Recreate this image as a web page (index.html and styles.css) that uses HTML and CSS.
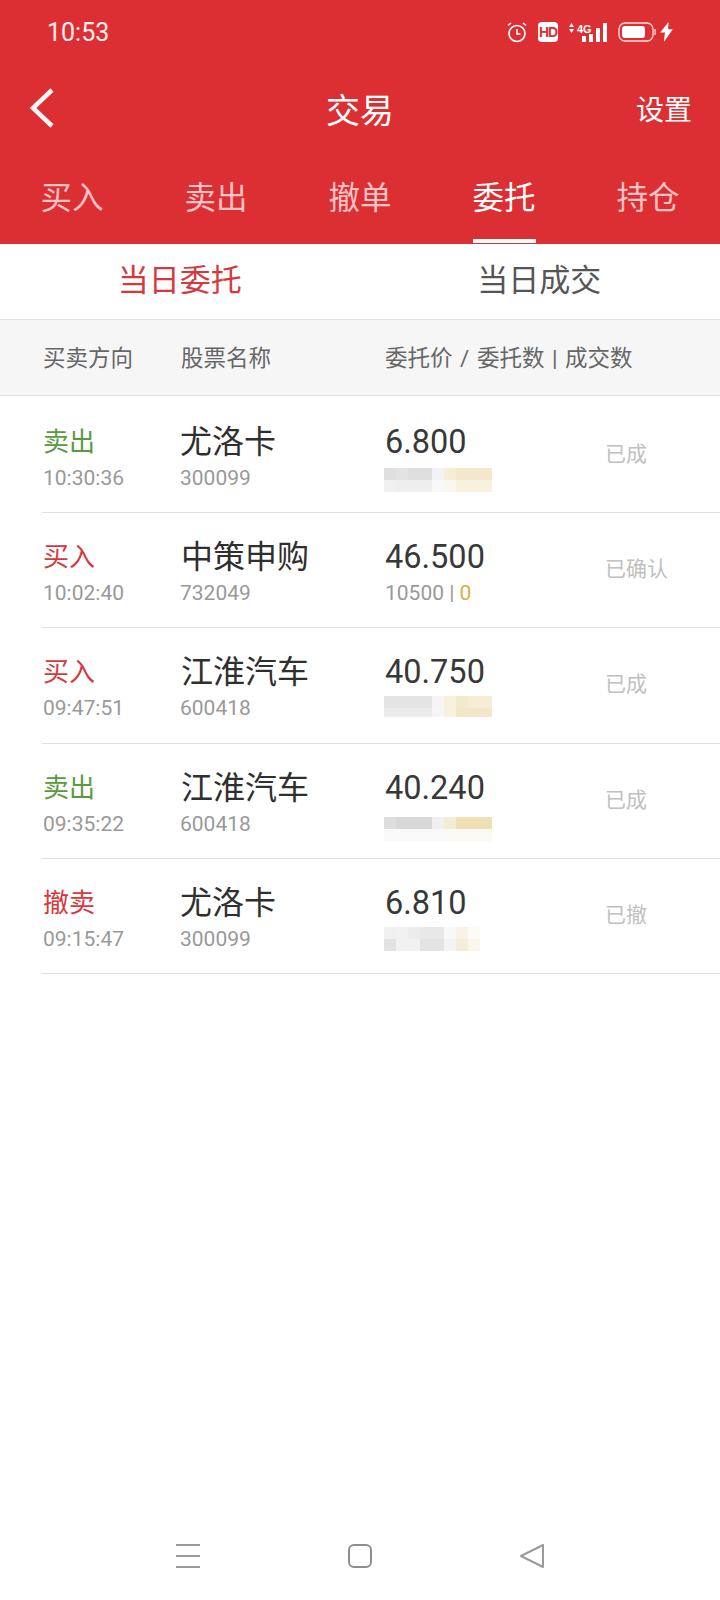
FILE: index.html
```html
<!DOCTYPE html>
<html lang="zh-CN">
<head>
  <meta charset="UTF-8" />
  <meta name="viewport" content="width=device-width, initial-scale=1.0"/>
  <title>交易</title>
  <link rel="stylesheet" href="styles.css">
</head>
<body>
  <div class="screen">
    <header class="top">
      <div class="status">
        <span class="clock">10:53</span>
        <div class="status-icons">
          <svg width="20" height="22" viewBox="0 0 20 22" fill="none" stroke="#fff" stroke-width="1.6">
            <circle cx="10" cy="12.500" r="8"/>
            <path d="M10 8v5h3.500M1 4.500 4 2M19 4.500 16 2"/>
          </svg>
          <span class="hd">HD</span>
          <svg width="38" height="24" viewBox="0 0 38 24" fill="#fff">
            <path d="M0 7 2.500 3 5 7zM0 9h5l-2.500 4z"/>
            <text x="8" y="13" class="net">4G</text>
            <rect x="13" y="16" width="4" height="6"/>
            <rect x="20" y="14" width="4" height="8"/>
            <rect x="27" y="8" width="4" height="14"/>
            <rect x="34" y="3" width="4" height="19"/>
          </svg>
          <svg width="38" height="22" viewBox="0 0 38 22" fill="none">
            <rect x="1" y="2" width="34" height="18" rx="6" stroke="#fff" stroke-width="1.300" opacity=".85"/>
            <rect x="4" y="5" width="23" height="12" rx="3" fill="#fff"/>
            <path d="M37 8v6" stroke="#fff" stroke-width="1.300" opacity=".85"/>
          </svg>
          <svg class="bolt" width="13" height="20" viewBox="0 0 12 19" fill="#fff">
            <path d="M8 0 0 10h4.500L3.500 19 12 7H7.500z"/>
          </svg>
        </div>
      </div>
      <div class="titlebar">
        <svg class="back" width="28" height="42" viewBox="0 0 28 42" fill="none" stroke="#fff" stroke-width="4.500" opacity=".95">
          <path d="M24 3 5 21l19 18"/>
        </svg>
        <h1>交易</h1>
        <a class="settings">设置</a>
      </div>
      <nav class="tabs">
        <a>买入</a>
        <a>卖出</a>
        <a>撤单</a>
        <a class="on">委托</a>
        <a>持仓</a>
      </nav>
    </header>

    <div class="subtabs">
      <a class="on">当日委托</a>
      <a>当日成交</a>
    </div>

    <div class="thead">
      <span class="h1">买卖方向</span>
      <span class="h2">股票名称</span>
      <span class="h3">委托价 / 委托数 | 成交数</span>
    </div>

    <div class="list">
      <div class="row">
        <div class="c1"><div class="dir green">卖出</div><div class="sub">10:30:36</div></div>
        <div class="c2"><div class="name">尤洛卡</div><div class="sub">300099</div></div>
        <div class="c3">
          <div class="price">6.800</div>
          <svg class="mosaic" width="108" height="24" viewBox="0 0 108 24" shape-rendering="crispEdges">
            <rect width="12" height="12" fill="#dfdfdf"/><rect x="12" width="12" height="12" fill="#e3e3e3"/><rect x="24" width="24" height="12" fill="#dedede"/><rect x="48" width="12" height="12" fill="#f3f3f3"/><rect x="60" width="12" height="12" fill="#f5edd8"/><rect x="72" width="36" height="12" fill="#f3e8cc"/>
            <rect y="12" width="12" height="12" fill="#f0f0f0"/><rect x="12" y="12" width="36" height="12" fill="#eeeeee"/><rect x="48" y="12" width="12" height="12" fill="#f8f8f8"/><rect x="60" y="12" width="12" height="12" fill="#faf7ec"/><rect x="72" y="12" width="36" height="12" fill="#f7f1dd"/>
          </svg>
        </div>
        <div class="state">已成</div>
      </div>

      <div class="row">
        <div class="c1"><div class="dir red">买入</div><div class="sub">10:02:40</div></div>
        <div class="c2"><div class="name wide">中策申购</div><div class="sub">732049</div></div>
        <div class="c3">
          <div class="price">46.500</div>
          <div class="sub">10500 | <span class="done">0</span></div>
        </div>
        <div class="state">已确认</div>
      </div>

      <div class="row">
        <div class="c1"><div class="dir red">买入</div><div class="sub">09:47:51</div></div>
        <div class="c2"><div class="name wide">江淮汽车</div><div class="sub">600418</div></div>
        <div class="c3">
          <div class="price">40.750</div>
          <svg class="mosaic near" width="108" height="24" viewBox="0 0 108 24" shape-rendering="crispEdges">
            <rect width="48" height="12" fill="#e4e4e4"/><rect x="48" width="12" height="12" fill="#f5f5f5"/><rect x="60" width="12" height="12" fill="#f6f0dd"/><rect x="72" width="12" height="12" fill="#f3e9cd"/><rect x="84" width="24" height="12" fill="#f5edd8"/>
            <rect y="12" width="48" height="9" fill="#ebebeb"/><rect x="48" y="12" width="12" height="9" fill="#f6f6f6"/><rect x="60" y="12" width="12" height="9" fill="#f6f0dd"/><rect x="72" y="12" width="36" height="9" fill="#f2e7c8"/>
          </svg>
        </div>
        <div class="state">已成</div>
      </div>

      <div class="row">
        <div class="c1"><div class="dir green">卖出</div><div class="sub">09:35:22</div></div>
        <div class="c2"><div class="name wide">江淮汽车</div><div class="sub">600418</div></div>
        <div class="c3">
          <div class="price">40.240</div>
          <svg class="mosaic far" width="108" height="24" viewBox="0 0 108 24" shape-rendering="crispEdges">
            <rect width="12" height="12" fill="#dedede"/><rect x="12" width="36" height="12" fill="#d8d8d8"/><rect x="48" width="12" height="12" fill="#f0f0f0"/><rect x="60" width="12" height="12" fill="#f3ecd2"/><rect x="72" width="36" height="12" fill="#efe0b5"/>
            <rect y="12" width="60" height="12" fill="#f9f9f9"/><rect x="60" y="12" width="48" height="12" fill="#fbf9f4"/>
          </svg>
        </div>
        <div class="state">已成</div>
      </div>

      <div class="row">
        <div class="c1"><div class="dir red">撤卖</div><div class="sub">09:15:47</div></div>
        <div class="c2"><div class="name">尤洛卡</div><div class="sub">300099</div></div>
        <div class="c3">
          <div class="price">6.810</div>
          <svg class="mosaic near" width="108" height="24" viewBox="0 0 108 24" shape-rendering="crispEdges">
            <rect width="12" height="12" fill="#f0f0f0"/><rect x="12" width="12" height="12" fill="#f1f1f1"/><rect x="24" width="12" height="12" fill="#ececec"/><rect x="36" width="24" height="12" fill="#e8e8e8"/><rect x="60" width="12" height="12" fill="#f8f8f8"/><rect x="72" width="12" height="12" fill="#f8f3e6"/><rect x="84" width="12" height="12" fill="#fdfbf5"/>
            <rect y="12" width="12" height="12" fill="#e2e2e2"/><rect x="12" y="12" width="24" height="12" fill="#f1f1f1"/><rect x="36" y="12" width="24" height="12" fill="#e3e3e3"/><rect x="60" y="12" width="12" height="12" fill="#f3f3f3"/><rect x="72" y="12" width="12" height="12" fill="#f5edd8"/><rect x="84" y="12" width="12" height="12" fill="#fbf6ea"/>
          </svg>
        </div>
        <div class="state">已撤</div>
      </div>
    </div>

    <div class="navbar">
      <svg width="24" height="24" viewBox="0 0 24 24" stroke="#9a9a9a" stroke-width="2">
        <path d="M0 1h24M0 12h24M0 23h24"/>
      </svg>
      <svg width="24" height="24" viewBox="0 0 24 24" fill="none" stroke="#8f8f8f" stroke-width="2">
        <rect x="1" y="1" width="22" height="22" rx="5"/>
      </svg>
      <svg width="24" height="24" viewBox="0 0 24 24" fill="none" stroke="#9a9a9a" stroke-width="2" stroke-linejoin="round">
        <path d="M1 12 23 1v22z"/>
      </svg>
    </div>
  </div>
</body>
</html>
```

FILE: styles.css
```css
* {
  box-sizing: border-box;
}
body {
  margin: 0;
  background: #fff;
  font-family: Roboto, "Noto Sans CJK SC", sans-serif;
  color: #333;
}
.screen {
  height: 1600px;
  display: flex;
  flex-direction: column;
  overflow: hidden;
}
.top {
  background: #dc2f33;
  color: #fff;
}
.status {
  height: 64px;
  display: flex;
  align-items: center;
  justify-content: space-between;
  padding: 0 47px;
}
.clock {
  font-size: 25px;
  opacity: .92;
}
.status-icons {
  display: flex;
  align-items: center;
  gap: 11px;
}
.hd {
  width: 20px;
  height: 20px;
  border-radius: 4px;
  background: #fff;
  color: #dc2f33;
  font: bold 14px/20px "Liberation Sans", sans-serif;
  letter-spacing: -1px;
  text-align: center;
}
.net {
  font: bold 11px "Liberation Sans", sans-serif;
}
.bolt {
  margin-left: -7px;
}
.titlebar {
  height: 88px;
  display: flex;
  align-items: center;
  justify-content: space-between;
  padding: 0 28px;
  position: relative;
}
.titlebar h1 {
  position: absolute;
  left: 0;
  right: 0;
  margin: 0;
  font-size: 34px;
  font-weight: 400;
  text-align: center;
}
.settings {
  font-size: 28px;
}
.tabs {
  height: 92px;
  display: grid;
  grid-template-columns: repeat(5, 1fr);
  text-align: center;
}
.tabs a {
  justify-self: center;
  align-self: start;
  width: 63px;
  height: 91px;
  padding-top: 24px;
  font-size: 31.500px;
  line-height: 46px;
  white-space: nowrap;
  color: #f8c3c4;
}
.tabs a.on {
  color: #fff;
  border-bottom: 4px solid #fff;
}
.subtabs {
  height: 75px;
  display: grid;
  grid-template-columns: 1fr 1fr;
  text-align: center;
  font-size: 31px;
  line-height: 74px;
  color: #555;
  padding-right: 1px;
}
.subtabs .on {
  color: #d6383d;
}
.thead {
  height: 77px;
  display: flex;
  align-items: center;
  padding: 0 0 4px 43px;
  background: #f6f6f6;
  border-top: 1px solid #e2e2e2;
  border-bottom: 1px solid #e2e2e2;
  font-size: 22.500px;
  color: #666;
  white-space: nowrap;
}
.h1 {
  width: 138px;
}
.h2 {
  width: 204px;
}
.h3 {
  word-spacing: 2px;
}
.c1 {
  width: 137px;
  margin-left: 1px;
  flex: none;
}
.c2 {
  width: 205px;
  flex: none;
}
.c3 {
  width: 220px;
  flex: none;
}
.list {
  margin-top: 2px;
}
.row {
  height: 115.200px;
  margin-left: 42px;
  padding-top: 25px;
  display: flex;
  align-items: flex-start;
  border-bottom: 1px solid #e0e0e0;
}
.dir {
  font-size: 26px;
  line-height: 38px;
}
.green {
  color: #5a9a3f;
}
.red {
  color: #d6383d;
}
.sub {
  font-size: 21px;
  line-height: 34px;
  color: #999;
}
.name {
  font-size: 32px;
  line-height: 38px;
  color: #2f2f2f;
}
.name.wide {
  margin-left: 1px;
}
.price {
  font-size: 32.500px;
  line-height: 38px;
  color: #383838;
}
.mosaic {
  display: block;
  margin: 7px 0 0 -1px;
}
.mosaic.near {
  margin-top: 5px;
}
.mosaic.far {
  margin-top: 10px;
}
.done {
  color: #e3ac45;
}
.state {
  margin-top: 12px;
  font-size: 21px;
  line-height: 38px;
  color: #c0c0c0;
}
.navbar {
  margin-top: auto;
  height: 88px;
  display: flex;
  align-items: center;
  justify-content: center;
  gap: 148px;
}
```
